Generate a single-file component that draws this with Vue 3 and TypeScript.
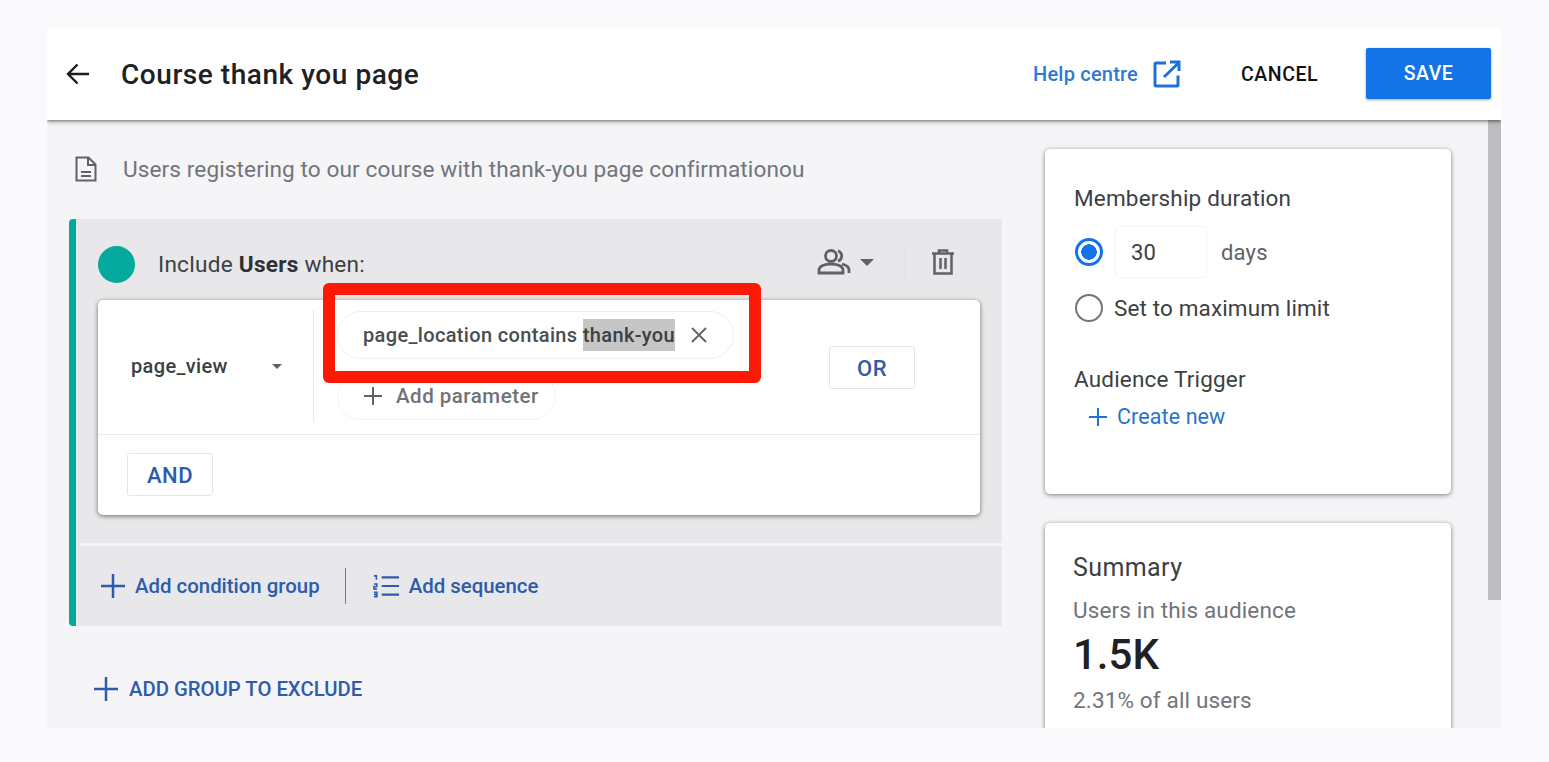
<script setup lang="ts">
const title = 'Course thank you page'
</script>

<template>
  <div class="frame">
    <header class="top">
      <svg class="back" viewBox="0 0 26 26" width="26" height="26"><path d="M24 13H3.500M12.500 3.500 3 13l9.500 9.500" fill="none" stroke="#1c1b1f" stroke-width="2.400"/></svg>
      <h1 class="title">{{ title }}</h1>
      <a class="help">Help centre</a>
      <svg class="ext" viewBox="0 0 28 28" width="28" height="28"><path d="M13 3H3a1 1 0 0 0-1 1v21a1 1 0 0 0 1 1h21a1 1 0 0 0 1-1V15.500M11 17 25.500 3M17 2h9v9" fill="none" stroke="#1b73d8" stroke-width="3"/></svg>
      <button class="cancel">CANCEL</button>
      <button class="save">SAVE</button>
    </header>
    <div class="body">
      <main class="left">
        <div class="desc">
          <svg viewBox="0 0 24 28" width="24" height="28"><path d="M2.500 2.500h12l7 7v16h-19zM14 2.500v7.500h7.500M7 17h10M7 21h10" fill="none" stroke="#5f6368" stroke-width="2"/></svg>
          <span>Users registering to our course with thank-you page confirmationou</span>
        </div>
        <section class="panel">
          <div class="panel-head">
            <span class="dot"></span>
            <span class="inc">Include <b>Users</b> when:</span>
            <svg class="people" viewBox="0 0 34 26" width="34" height="26"><circle cx="14" cy="7" r="5.500" fill="none" stroke="#5f6368" stroke-width="2.800"/><path d="M2 24v-3c0-4 6-6 12-6s12 2 12 6v3zM21 1.800a5.500 5.500 0 0 1 0 10.400M25 15c4 1 7 3 7 6v3" fill="none" stroke="#5f6368" stroke-width="2.800"/></svg>
            <span class="caret head-caret"></span>
            <span class="vsep"></span>
            <svg class="trash" viewBox="0 0 24 28" width="24" height="28"><path d="M1 5.500h22M8 5.500V2.500h8v3M3.500 5.500v20h17v-20M9.500 10v11M14.500 10v11" fill="none" stroke="#5f6368" stroke-width="2.500"/></svg>
          </div>
          <div class="card">
            <div class="row1">
              <div class="event">
                <span class="ev-name">page_view</span>
                <span class="caret small"></span>
              </div>
              <div class="params">
                <div class="chip">
                  <span class="chip-text">page_location contains <mark>thank-you</mark></span>
                  <svg viewBox="0 0 16 16" width="16" height="16"><path d="M1 1l14 14M15 1 1 15" stroke="#5f6368" stroke-width="1.800"/></svg>
                </div>
                <div class="add-param">
                  <svg viewBox="0 0 20 20" width="20" height="20"><path d="M10 1v18M1 10h18" stroke="#5f6368" stroke-width="2"/></svg>
                  <span>Add parameter</span>
                </div>
              </div>
              <button class="outline or">OR</button>
            </div>
            <div class="row2"><button class="outline">AND</button></div>
            <div class="redbox"></div>
          </div>
          <div class="white-line"></div>
          <div class="panel-foot">
            <span class="link">
              <svg viewBox="0 0 24 24" width="24" height="24"><path d="M12 0v24M0 12h24" stroke="#2c5cab" stroke-width="2.500"/></svg>
              Add condition group
            </span>
            <span class="foot-sep"></span>
            <span class="link seq">
              <svg viewBox="0 0 28 24" width="27" height="24"><path d="M9 3h18M9 12h18M9 21h18" stroke="#2c5cab" stroke-width="2.300"/><path d="M1 1.500h2.500v4M1 10h3v2.500H1V15h3M1 18.500h3V23H1M1 20.700h3" fill="none" stroke="#2c5cab" stroke-width="1.600"/></svg>
              Add sequence
            </span>
          </div>
        </section>
        <div class="exclude">
          <svg viewBox="0 0 24 24" width="24" height="24"><path d="M12 0v24M0 12h24" stroke="#2c5cab" stroke-width="2.500"/></svg>
          <span>ADD GROUP TO EXCLUDE</span>
        </div>
      </main>
      <aside class="right">
        <section class="side-card one">
          <div class="label">Membership duration</div>
          <div class="radio-row days">
            <span class="radio on"></span>
            <span class="num">30</span>
            <span class="unit">days</span>
          </div>
          <div class="radio-row max">
            <span class="radio"></span>
            <span class="unit tight">Set to maximum limit</span>
          </div>
          <div class="label trigger">Audience Trigger</div>
          <div class="create">
            <svg viewBox="0 0 18 18" width="18" height="18"><path d="M9 0v18M0 9h18" stroke="#1b73d8" stroke-width="2"/></svg>
            <span>Create new</span>
          </div>
        </section>
        <section class="side-card two">
          <div class="sum-title">Summary</div>
          <div class="sum-sub">Users in this audience</div>
          <div class="sum-num">1.5K</div>
          <div class="sum-sub pct">2.31% of all users</div>
        </section>
      </aside>
      <div class="scrollbar"></div>
    </div>
  </div>
</template>

<style>
html, body { margin: 0; background: #faf9fb; }
</style>

<style scoped>
.frame {
  width: 1454px; height: 700px; margin: 28px 0 0 47px; overflow: hidden;
  background: #f5f4f7; font-family: Roboto, "Liberation Sans", sans-serif; color: #3c4043;
  display: flex; flex-direction: column;
}
.top {
  height: 92px; flex: none; background: #fff; display: flex; align-items: center;
  box-shadow: 0 1px 3px rgba(0,0,0,.5), 0 3px 6px rgba(0,0,0,.12); position: relative; z-index: 2;
  padding: 0 10px 0 18px; box-sizing: border-box;
}
.back { margin-right: 30px; }
.title { margin: 0; font-size: 28px; font-weight: 500; color: #202124; flex: 1; letter-spacing: .55px; }
.help { font-size: 20px; font-weight: 500; color: #2b7bd3; margin-right: 15px; letter-spacing: .2px; }
.ext { margin-right: 60px; }
.cancel, .save { border: 0; font: 500 19.500px Roboto, sans-serif; cursor: pointer; padding: 0; letter-spacing: .55px; }
.cancel { background: none; color: #111; width: 77px; margin-right: 48px; }
.save {
  background: #1473e6; color: #fff; width: 125px; height: 51px; border-radius: 2px; margin-top: -2px;
  box-shadow: 0 1px 3px rgba(0,0,0,.35);
}
.body { flex: 1; display: flex; min-height: 0; }
.left { width: 933px; margin-left: 22px; padding-top: 37px; flex: none; }
.desc { height: 24px; display: flex; align-items: center; gap: 25px; font-size: 22.600px; color: #70757a; margin-left: 5px; letter-spacing: .1px; }
.panel {
  margin-top: 38px; height: 407px; background: #e8e7ea; border-left: 7px solid #05a99d;
  border-radius: 4px 0 0 4px; box-sizing: border-box; display: flex; flex-direction: column;
}
.panel-head { height: 81px; display: flex; align-items: center; padding: 10px 0 0 22px; box-sizing: border-box; flex: none; }
.dot { width: 37px; height: 37px; border-radius: 50%; background: #05a99d; margin-right: 23px; }
.inc { font-size: 22.600px; color: #3c4043; flex: 1; letter-spacing: .25px; }
.inc b { font-weight: 700; color: #303134; }
.people { margin: -6px 9px 0 0; }
.caret { width: 0; height: 0; border: 7.500px solid transparent; border-top-color: #5f6368; border-bottom: 0; }
.head-caret { margin: -4px 0 0 0; }
.vsep { width: 1px; height: 36px; background: #e2e1e4; margin: -6px 26px 0 30px; }
.trash { margin: -6px 47px 0 0; }
.card {
  margin: 0 22px; height: 215px; flex: none; background: #fff; border-radius: 5px;
  box-shadow: 0 1px 4px rgba(0,0,0,.45), 0 2px 6px rgba(0,0,0,.1); position: relative;
}
.row1 { height: 135px; display: flex; border-bottom: 1px solid #ececec; box-sizing: border-box; }
.event {
  width: 216px; margin-top: 10px; height: 112px; border-right: 1px solid #e8e8e8; box-sizing: border-box;
  display: flex; align-items: center; padding-left: 33px; font-size: 20px; font-weight: 500; color: #3c4043;
}
.ev-name { width: 141px; letter-spacing: .35px; }
.caret.small { border-width: 5px; border-bottom: 0; }
.params { width: 397px; margin-left: 23px; padding-top: 11px; }
.chip {
  height: 48px; border: 1px solid #eeeeee; border-radius: 24px; box-sizing: border-box;
  display: flex; align-items: center; padding-left: 25px; font-size: 20px; font-weight: 500; color: #4a4d50;
}
.chip svg { margin-left: 16px; }
.chip-text { letter-spacing: .35px; white-space: nowrap; }
mark { background: #c6c6c6; color: #3c4043; padding: 4px 0; }
.add-param {
  width: 219px; height: 47px; margin-top: 14px; border: 1px solid #f4f4f4; border-radius: 24px; box-sizing: border-box;
  display: flex; align-items: center; padding: 0 0 1px 25px; gap: 13px; font-size: 20.500px; font-weight: 500; color: #6f7276; letter-spacing: .5px;
}
.outline {
  background: #fff; border: 1px solid #e6e6e6; border-radius: 3px; color: #2c5cab;
  font: 500 22px Roboto, sans-serif; width: 86px; height: 43px; padding: 1px 0 0; letter-spacing: .5px;
}
.or { margin: 46px 0 0 95px; }
.row2 { height: 80px; padding: 18px 0 0 29px; box-sizing: border-box; }
.redbox {
  position: absolute; left: 225px; top: -17px; width: 438px; height: 100px; box-sizing: border-box;
  border: 12.500px solid #fb1a05; border-radius: 6px;
}
.white-line { height: 3px; background: #f6f5f8; margin-top: 28px; margin-left: 4px; flex: none; }
.panel-foot { flex: 1; display: flex; align-items: center; padding: 0 0 0 25px; }
.link { display: flex; align-items: center; gap: 10px; font-size: 20.400px; font-weight: 500; color: #2c5cab; }
.foot-sep { width: 1px; height: 36px; background: #7a7a7a; margin: 0 27px 0 25px; }
.seq { gap: 9px; font-size: 20.400px; }
.exclude { display: flex; align-items: center; gap: 11px; margin: 51px 0 0 25px; font-size: 20.300px; font-weight: 500; color: #2c5cab; }
.right { width: 406px; margin-left: 43px; padding-top: 29px; flex: none; }
.side-card {
  background: #fff; border-radius: 5px; box-sizing: border-box; padding-left: 29px;
  box-shadow: 0 1px 4px rgba(0,0,0,.4), 0 2px 8px rgba(0,0,0,.1);
}
.one { height: 345px; padding-top: 36px; }
.two { height: 260px; margin-top: 29px; padding: 30px 0 0 28px; }
.label { font-size: 22.500px; line-height: 26px; color: #3c4043; letter-spacing: .18px; }
.radio-row { display: flex; align-items: center; font-size: 22px; color: #5f6368; letter-spacing: .2px; }
.days { margin-top: 15px; }
.max { margin-top: 16px; }
.radio { width: 28px; height: 28px; border: 2px solid #70757a; border-radius: 50%; box-sizing: border-box; margin-left: 1px; flex: none; }
.radio.on { border: 3px solid #1473e6; background: radial-gradient(circle, #1473e6 0 7.500px, #fff 8px); }
.num { width: 92px; height: 52px; border: 1px solid #f4f4f4; border-radius: 3px; box-sizing: border-box; margin-left: 12px; display: flex; align-items: center; padding-left: 15px; color: #3c4043; }
.unit { margin-left: 14px; }
.unit.tight { margin-left: 11px; color: #3c4043; font-size: 22.500px; letter-spacing: .13px; }
.trigger { margin-top: 44px; }
.create { display: flex; align-items: center; gap: 10px; margin: 12px 0 0 15px; font-size: 21.500px; font-weight: 400; color: #2b73c7; letter-spacing: .1px; }
.sum-title { font-size: 25px; line-height: 30px; color: #3c4043; letter-spacing: .4px; }
.sum-sub { font-size: 22.500px; line-height: 26px; color: #70757a; margin-top: 14px; letter-spacing: .15px; }
.sum-num { font-size: 42px; font-weight: 500; line-height: 50px; color: #202124; margin-top: 7px; }
.pct { margin-top: 7px; }
.scrollbar { width: 13px; height: 480px; background: #bebdc0; margin-left: 37px; flex: none; }
</style>
